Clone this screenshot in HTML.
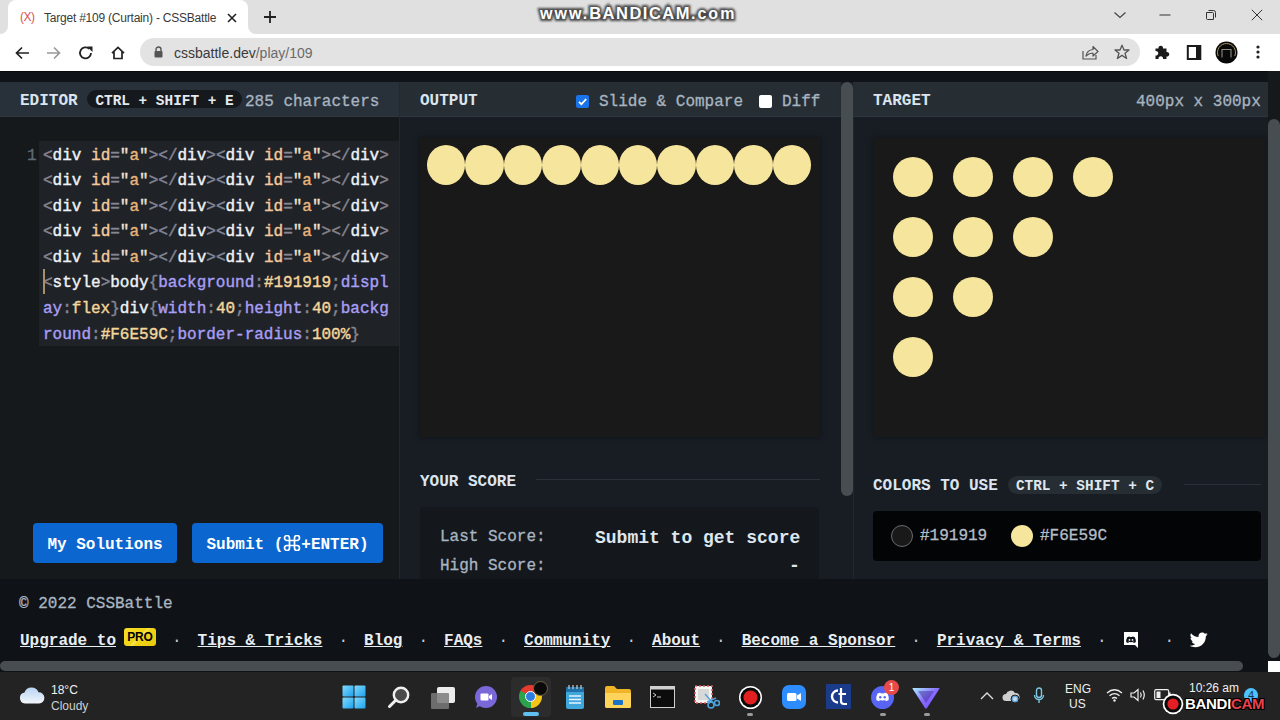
<!DOCTYPE html>
<html><head><meta charset="utf-8">
<style>
*{margin:0;padding:0;box-sizing:border-box}
html,body{width:1280px;height:720px;overflow:hidden;background:#15181c;font-family:"Liberation Mono",monospace}
.abs{position:absolute}
.fav{left:20px;top:10px;font:12px/14px "Liberation Sans",sans-serif;color:#e05050;letter-spacing:-0.5px}
.tabtitle{left:44px;top:10px;font:12px/16px "Liberation Sans",sans-serif;color:#3a3a3a;letter-spacing:-0.22px;white-space:nowrap}
.url{left:174px;top:44px;font:14px/18px "Liberation Sans",sans-serif;white-space:nowrap}
.bandicam{left:540px;top:3px;font:bold 16px/18px "Liberation Sans",sans-serif;color:#fff;text-shadow:0 0 1px #222,0 0 2px #333,0 0 3px #444,0 0 4px #666;white-space:nowrap;letter-spacing:2px;transform-origin:0 0}
.bandicam b{font-size:16.5px;letter-spacing:1.5px}
#tabbar{left:0;top:0;width:1280px;height:34px;background:#e0e0e0}
#tab{left:8px;top:0;width:240px;height:34px;background:#fff;border-radius:8px 8px 0 0}
#toolbar{left:0;top:34px;width:1280px;height:37px;background:#fff}
#omni{left:140px;top:38px;width:1000px;height:28px;background:#e3e3e3;border-radius:14px}
#band{left:0;top:71px;width:1280px;height:11px;background:#101317;border-top:1px solid #08090b}
.hdr{top:82px;height:35px;background:#262e34;border-bottom:1px solid #2e373e}
.hdr .t{position:absolute;top:8px;font:bold 16px/19px "Liberation Mono",monospace;color:#dbe3ef}
#ed{left:0;top:82px;width:399px;height:497px;background:#15191b}
#edb{left:399px;top:82px;width:1px;height:497px;background:#22282e}
#out{left:400px;top:82px;width:441px;height:497px;background:#181d24}
#tgt{left:853px;top:82px;width:415px;height:497px;background:#181d24}
#sb1{left:841px;top:82px;width:12px;height:497px;background:#181d24}
#sb1t{left:841px;top:82px;width:12px;height:414px;background:#474d51;border-radius:6px}
#sb2{left:1268px;top:71px;width:12px;height:590px;background:#15191c}
#sb2t{left:1268px;top:119px;width:12px;height:539px;background:#474d51;border-radius:6px}
#footer{left:0;top:579px;width:1280px;height:81px;background:#0f1216}
#hscroll{left:0;top:660px;width:1280px;height:12px;background:#0f1216}
#hthumb{left:0;top:661px;width:1243px;height:10px;background:#474d51;border-radius:5px}
#taskbar{left:0;top:672px;width:1280px;height:48px;background:#232323}
.code{left:39px;top:141px;width:360px;height:205px;background:#1f2327}
.canvas{background:#191919;box-shadow:0 0 6px 1px rgba(0,0,0,.3)}
.ht{top:90.75px;font:bold 16px/20px "Liberation Mono",monospace;color:#dce4ee;white-space:nowrap}
.hsub{top:91.5px;font:16px/20px "Liberation Mono",monospace;color:#a8b4c0;white-space:nowrap;-webkit-text-stroke:0.3px currentColor}
.pill{height:18px;padding-top:2px;border-radius:9px;background:#15191d;color:#e4e9ef;font:bold 14.4px/18px "Liberation Mono",monospace;text-align:center;white-space:nowrap}
.lnum{left:27px;top:143.5px;font:16px/25.6px "Liberation Mono",monospace;color:#5f6a74;-webkit-text-stroke:0.3px currentColor}
.src{left:43px;top:143.5px;width:360px;font:16px/25.6px "Liberation Mono",monospace;white-space:pre;color:#e8edf3;-webkit-text-stroke:0.4px currentColor}
.src .p{color:#868593}.src .w{color:#eef2f6}.src .o{color:#f3c99c}.src .q{color:#efe2d6}.src .a{color:#eab47c}.src .v{color:#a89ef4}.src .y{color:#f3d69c}
.btn{top:523px;height:40px;background:#0b66d0;border-radius:4px;color:#fff;font:bold 16px/44px "Liberation Mono",monospace;text-align:center;white-space:nowrap}
.sec{font:bold 16px/20px "Liberation Mono",monospace;color:#dce4ee;white-space:nowrap}
.lbl{font:16px/20px "Liberation Mono",monospace;color:#a9b5c2;white-space:nowrap;-webkit-text-stroke:0.3px currentColor}
.big{font:bold 18px/22px "Liberation Mono",monospace;color:#dfe6ee;white-space:nowrap}
.pill2{height:18px;border-radius:9px;background:#262d33;color:#dfe6ee;font:bold 14.4px/18px "Liberation Mono",monospace;text-align:center;white-space:nowrap;padding-top:1px}
.sw{top:526px;font:16px/20px "Liberation Mono",monospace;color:#b3bdc7;white-space:nowrap;-webkit-text-stroke:0.3px currentColor}
.copy{font:16px/20px "Liberation Mono",monospace;color:#a9b5c2;white-space:nowrap;-webkit-text-stroke:0.3px currentColor}
.links{font:bold 16px/20px "Liberation Mono",monospace;color:#e8edf2;white-space:nowrap}
.links u{text-decoration:underline;text-underline-offset:1.2px;text-decoration-thickness:1px}
.links .d{display:inline-block;width:9.6px;margin:0 16px;text-align:center;color:#c0c8d0;font-weight:normal}
.links .pro{display:inline-block;margin-left:8px;width:32px;height:18px;vertical-align:top;margin-top:-3px;background:linear-gradient(135deg,#f7dc2a 0%,#f2d516 45%,#fbe55a 50%,#f2d516 55%,#e8c80a 100%);border-radius:3px;color:#000;font:bold 12px/19px "Liberation Sans",sans-serif;text-align:center;letter-spacing:-0.2px}
.links .ico{display:inline-block;width:26px;height:10px}
.tb1{font:12px/15px "Liberation Sans",sans-serif;color:#f2f2f2;white-space:nowrap}
.tb2{font:12px/15px "Liberation Sans",sans-serif;color:#f0f0f0;white-space:nowrap}
.badge{width:15px;height:15px;border-radius:50%;background:#e84a4a;color:#fff;font:10px/15px "Liberation Sans",sans-serif;text-align:center}
.bcam{font:bold 15px/18px "Liberation Sans",sans-serif;color:#fff;letter-spacing:-0.3px;text-shadow:1px 0 0 #000,-1px 0 0 #000,0 1px 0 #000,0 -1px 0 #000,1px 1px 0 #000,-1px -1px 0 #000,1px -1px 0 #000,-1px 1px 0 #000}
.c{display:block;flex:1 1 0;height:40px;background:#f6e59c;border-radius:50%}
.dot{position:absolute;background:#f6e59c;border-radius:50%}
</style></head><body>
<div id="tabbar" class="abs"></div>
<div id="tab" class="abs"></div>
<div class="abs" style="left:248px;top:26px;width:8px;height:8px;background:#fff"></div>
<div class="abs" style="left:248px;top:0;width:30px;height:34px;background:#e0e0e0;border-bottom-left-radius:8px"></div>
<div class="abs" style="left:0;top:26px;width:8px;height:8px;background:#fff"></div>
<div class="abs" style="left:-22px;top:0;width:30px;height:34px;background:#e0e0e0;border-bottom-right-radius:8px"></div>
<div class="abs fav">(X)</div>
<div class="abs tabtitle">Target #109 (Curtain) - CSSBattle</div>
<svg class="abs" style="left:226px;top:12px" width="12" height="12" viewBox="0 0 12 12"><path d="M2 2L10 10M10 2L2 10" stroke="#222" stroke-width="1.6"/></svg>
<svg class="abs" style="left:263px;top:10px" width="14" height="14" viewBox="0 0 14 14"><path d="M7 1V13M1 7H13" stroke="#222" stroke-width="1.8"/></svg>
<svg class="abs" style="left:532px;top:0" width="216" height="28" viewBox="0 0 216 28"><defs><filter id="bl" x="-10%" y="-30%" width="120%" height="160%"><feGaussianBlur stdDeviation="1.2"/></filter></defs><g font-family="Liberation Sans" font-weight="bold" font-size="16" style="letter-spacing:2px"><text x="8" y="19" stroke="#4a4a4a" stroke-width="4" fill="#4a4a4a" filter="url(#bl)">www.<tspan style="letter-spacing:1.5px" font-size="16.5">BANDICAM</tspan>.com</text><text x="8" y="19" fill="#fff">www.<tspan style="letter-spacing:1.5px" font-size="16.5">BANDICAM</tspan>.com</text></g></svg>
<svg class="abs" style="left:1113px;top:10px" width="14" height="10" viewBox="0 0 14 10"><path d="M1.5 2.5L7 7.5L12.5 2.5" fill="none" stroke="#444" stroke-width="1.2"/></svg>
<svg class="abs" style="left:1159px;top:9px" width="12" height="12" viewBox="0 0 12 12"><path d="M0.5 6H11.5" stroke="#333" stroke-width="1"/></svg>
<svg class="abs" style="left:1205px;top:9px" width="12" height="12" viewBox="0 0 12 12"><path d="M3.5 1.5H8.5Q10.5 1.5 10.5 3.5V8.5M1.5 3.5H7.5Q8.5 3.5 8.5 4.5V10.5H2.5Q1.5 10.5 1.5 9.5Z" fill="none" stroke="#333" stroke-width="1"/></svg>
<svg class="abs" style="left:1251px;top:9px" width="12" height="12" viewBox="0 0 12 12"><path d="M0.8 0.8L11.2 11.2M11.2 0.8L0.8 11.2" stroke="#333" stroke-width="1"/></svg>
<div id="toolbar" class="abs"></div>
<div id="omni" class="abs"></div>
<svg class="abs" style="left:14px;top:45px" width="16" height="16" viewBox="0 0 16 16"><path d="M15 8H2.5M8 2.5L2.5 8L8 13.5" fill="none" stroke="#222" stroke-width="1.7"/></svg>
<svg class="abs" style="left:46px;top:45px" width="16" height="16" viewBox="0 0 16 16"><path d="M1 8H13.5M8 2.5L13.5 8L8 13.5" fill="none" stroke="#999" stroke-width="1.7"/></svg>
<svg class="abs" style="left:78px;top:45px" width="16" height="16" viewBox="0 0 16 16"><path d="M13 8A5.5 5.5 0 1 1 11.2 3.8" fill="none" stroke="#222" stroke-width="1.8"/><path d="M9 1.5H14.5V7Z" fill="#222"/></svg>
<svg class="abs" style="left:110px;top:45px" width="16" height="16" viewBox="0 0 16 16"><path d="M2 8.2L8 2.5L14 8.2M4 6.5V13.5H12V6.5" fill="none" stroke="#222" stroke-width="1.7" stroke-linejoin="miter"/></svg>
<svg class="abs" style="left:153px;top:46px" width="11" height="12" viewBox="0 0 11 12"><path d="M3 5V3.5A2.5 2.5 0 0 1 8 3.5V5" fill="none" stroke="#555" stroke-width="1.4"/><rect x="1.5" y="5" width="8" height="6.5" rx="1" fill="#555"/></svg>
<div class="abs url"><span style="color:#3a3a3a">cssbattle.dev</span><span style="color:#6a6a6a">/play/109</span></div>
<svg class="abs" style="left:1082px;top:44px" width="17" height="16" viewBox="0 0 17 16"><path d="M1 7V15H14V11" fill="none" stroke="#555" stroke-width="1.2"/><path d="M4 12Q5 6 11 5.5V2.5L16 7.5L11 12V9Q7 9 4 12Z" fill="none" stroke="#555" stroke-width="1.2" stroke-linejoin="round"/></svg>
<svg class="abs" style="left:1114px;top:44px" width="16" height="16" viewBox="0 0 16 16"><path d="M8 1.2L10 6H15L11 9.2L12.6 14.5L8 11.4L3.4 14.5L5 9.2L1 6H6Z" fill="none" stroke="#555" stroke-width="1.3" stroke-linejoin="round"/></svg>
<svg class="abs" style="left:1153px;top:43px" width="18" height="18" viewBox="0 0 18 18"><path d="M2.5 5.5H5.5A2.3 2.3 0 1 1 10 5.5H13.5V9A2.3 2.3 0 1 1 13.5 13.5V16H10A2.3 2.3 0 1 0 5.5 16H2.5V12.5A2.3 2.3 0 1 0 2.5 8Z" fill="#1a1a1a"/></svg>
<svg class="abs" style="left:1186px;top:45px" width="16" height="15" viewBox="0 0 16 15"><rect x="1.8" y="1" width="12.5" height="13" fill="none" stroke="#1a1a1a" stroke-width="2"/><rect x="10" y="1" width="4.3" height="13" fill="#1a1a1a"/></svg>
<svg class="abs" style="left:1215px;top:41px" width="23" height="23" viewBox="0 0 23 23"><circle cx="11.5" cy="11.5" r="11" fill="#080808"/><path d="M3.2 15A9 9 0 1 1 19.8 15" fill="none" stroke="#a8955e" stroke-width="1"/><path d="M7 16.5V8.5H16V16.5" fill="none" stroke="#8c8c84" stroke-width="1.1"/></svg>
<svg class="abs" style="left:1255px;top:44px" width="6" height="16" viewBox="0 0 6 16"><circle cx="3" cy="3" r="1.6" fill="#222"/><circle cx="3" cy="8" r="1.6" fill="#222"/><circle cx="3" cy="13" r="1.6" fill="#222"/></svg>
<div id="band" class="abs"></div>

<div id="ed" class="abs"></div>
<div id="edb" class="abs"></div>
<div class="abs hdr" style="left:0;width:399px;background:#28313a"></div>
<div class="abs ht" style="left:20px">EDITOR</div>
<div class="abs pill" style="left:87px;top:90px;width:155px">CTRL + SHIFT + E</div>
<div class="abs hsub" style="left:245px">285 characters</div>
<div class="abs code"></div>
<div class="abs lnum">1</div>
<div class="abs src"><span class="p">&lt;</span><span class="w">div</span> <span class="o">id</span><span class="p">=</span><span class="q">"</span><span class="a">a</span><span class="q">"</span><span class="p">&gt;&lt;/</span><span class="w">div</span><span class="p">&gt;&lt;</span><span class="w">div</span> <span class="o">id</span><span class="p">=</span><span class="q">"</span><span class="a">a</span><span class="q">"</span><span class="p">&gt;&lt;/</span><span class="w">div</span><span class="p">&gt;</span>
<span class="p">&lt;</span><span class="w">div</span> <span class="o">id</span><span class="p">=</span><span class="q">"</span><span class="a">a</span><span class="q">"</span><span class="p">&gt;&lt;/</span><span class="w">div</span><span class="p">&gt;&lt;</span><span class="w">div</span> <span class="o">id</span><span class="p">=</span><span class="q">"</span><span class="a">a</span><span class="q">"</span><span class="p">&gt;&lt;/</span><span class="w">div</span><span class="p">&gt;</span>
<span class="p">&lt;</span><span class="w">div</span> <span class="o">id</span><span class="p">=</span><span class="q">"</span><span class="a">a</span><span class="q">"</span><span class="p">&gt;&lt;/</span><span class="w">div</span><span class="p">&gt;&lt;</span><span class="w">div</span> <span class="o">id</span><span class="p">=</span><span class="q">"</span><span class="a">a</span><span class="q">"</span><span class="p">&gt;&lt;/</span><span class="w">div</span><span class="p">&gt;</span>
<span class="p">&lt;</span><span class="w">div</span> <span class="o">id</span><span class="p">=</span><span class="q">"</span><span class="a">a</span><span class="q">"</span><span class="p">&gt;&lt;/</span><span class="w">div</span><span class="p">&gt;&lt;</span><span class="w">div</span> <span class="o">id</span><span class="p">=</span><span class="q">"</span><span class="a">a</span><span class="q">"</span><span class="p">&gt;&lt;/</span><span class="w">div</span><span class="p">&gt;</span>
<span class="p">&lt;</span><span class="w">div</span> <span class="o">id</span><span class="p">=</span><span class="q">"</span><span class="a">a</span><span class="q">"</span><span class="p">&gt;&lt;/</span><span class="w">div</span><span class="p">&gt;&lt;</span><span class="w">div</span> <span class="o">id</span><span class="p">=</span><span class="q">"</span><span class="a">a</span><span class="q">"</span><span class="p">&gt;&lt;/</span><span class="w">div</span><span class="p">&gt;</span>
<span class="p">&lt;</span><span class="w">style</span><span class="p">&gt;</span><span class="w">body</span><span class="p">{</span><span class="v">background</span><span class="p">:</span><span class="y">#191919</span><span class="p">;</span><span class="v">displ</span>
<span class="v">ay</span><span class="p">:</span><span class="y">flex</span><span class="p">}</span><span class="w">div</span><span class="p">{</span><span class="v">width</span><span class="p">:</span><span class="y">40</span><span class="p">;</span><span class="v">height</span><span class="p">:</span><span class="y">40</span><span class="p">;</span><span class="v">backg</span>
<span class="v">round</span><span class="p">:</span><span class="y">#F6E59C</span><span class="p">;</span><span class="v">border-radius</span><span class="p">:</span><span class="y">100%</span><span class="p">}</span></div>
<div class="abs" style="left:43px;top:269px;width:2px;height:25px;background:#a88f6c"></div>
<div class="abs btn" style="left:33px;width:144px">My Solutions</div>
<div class="abs btn" style="left:192px;width:191px">Submit (<svg width="18" height="16" viewBox="-1 0 18 16" style="vertical-align:-2px"><path d="M5.5 3V13A2.5 2.5 0 1 1 3 10.5H13A2.5 2.5 0 1 1 10.5 13V3A2.5 2.5 0 1 1 13 5.5H3A2.5 2.5 0 1 1 5.5 3Z" fill="none" stroke="#fff" stroke-width="1.7"/></svg>+ENTER)</div>

<div id="out" class="abs"></div>
<div class="abs hdr" style="left:400px;width:441px"></div>
<div class="abs ht" style="left:420px">OUTPUT</div>
<div class="abs" style="left:576px;top:95px;width:13px;height:13px;background:#1a73e8;border-radius:2px"></div>
<svg class="abs" style="left:576px;top:95px" width="13" height="13" viewBox="0 0 13 13"><path d="M3 6.8L5.4 9.2L10.2 4" fill="none" stroke="#fff" stroke-width="1.8"/></svg>
<div class="abs hsub" style="left:599px">Slide &amp; Compare</div>
<div class="abs" style="left:759px;top:95px;width:13px;height:13px;background:#fff;border-radius:2px"></div>
<div class="abs hsub" style="left:782px">Diff</div>
<div class="abs canvas" style="left:419.5px;top:137.5px;width:400px;height:299.5px"></div>
<div class="abs" style="left:427px;top:145px;width:384px;height:40px;display:flex">
<i class="c"></i><i class="c"></i><i class="c"></i><i class="c"></i><i class="c"></i><i class="c"></i><i class="c"></i><i class="c"></i><i class="c"></i><i class="c"></i></div>

<div id="sb1" class="abs"></div>
<div id="sb1t" class="abs"></div>

<div id="tgt" class="abs"></div>
<div class="abs hdr" style="left:853px;width:415px"></div>
<div class="abs ht" style="left:873px">TARGET</div>
<div class="abs hsub" style="left:1136px">400px x 300px</div>
<div class="abs canvas" style="left:873.5px;top:137.5px;width:391px;height:299.5px"></div>
<div class="dot" style="left:893px;top:157px;width:40px;height:40px"></div>
<div class="dot" style="left:953px;top:157px;width:40px;height:40px"></div>
<div class="dot" style="left:1013px;top:157px;width:40px;height:40px"></div>
<div class="dot" style="left:1073px;top:157px;width:40px;height:40px"></div>
<div class="dot" style="left:893px;top:217px;width:40px;height:40px"></div>
<div class="dot" style="left:953px;top:217px;width:40px;height:40px"></div>
<div class="dot" style="left:1013px;top:217px;width:40px;height:40px"></div>
<div class="dot" style="left:893px;top:277px;width:40px;height:40px"></div>
<div class="dot" style="left:953px;top:277px;width:40px;height:40px"></div>
<div class="dot" style="left:893px;top:337px;width:40px;height:40px"></div>
<div id="sb2" class="abs"></div>

<div class="abs sec" style="left:420px;top:471.5px">YOUR SCORE</div>
<div class="abs" style="left:536px;top:479px;width:284px;height:1px;background:#2a3138"></div>
<div class="abs" style="left:420px;top:507px;width:399px;height:80px;background:#14181c;border-radius:4px"></div>
<div class="abs lbl" style="left:440px;top:526.5px">Last Score:</div>
<div class="abs lbl" style="left:440px;top:555.5px">High Score:</div>
<div class="abs big" style="left:595px;top:527px">Submit to get score</div>
<div class="abs big" style="left:789px;top:555px">-</div>

<div class="abs" style="left:853px;top:117px;width:1px;height:462px;background:#20262c"></div>
<div class="abs sec" style="left:873px;top:475.5px">COLORS TO USE</div>
<div class="abs pill2" style="left:1008px;top:475.5px;width:154px">CTRL + SHIFT + C</div>
<div class="abs" style="left:1184px;top:484px;width:77px;height:1px;background:#2a3138"></div>
<div class="abs" style="left:873px;top:511px;width:388px;height:50px;background:#030405;border-radius:4px"></div>
<div class="abs" style="left:891px;top:525px;width:22px;height:22px;border-radius:50%;background:#191919;border:1px solid #6b6b6b"></div>
<div class="abs sw" style="left:920px">#191919</div>
<div class="abs" style="left:1011px;top:525px;width:22px;height:22px;border-radius:50%;background:#f6e59c"></div>
<div class="abs sw" style="left:1040px">#F6E59C</div>

<div id="footer" class="abs"></div>
<div class="abs copy" style="left:19px;top:593.5px">&copy; 2022 CSSBattle</div>
<div class="abs links" style="left:20px;top:631px"><u>Upgrade to</u><span class="pro">PRO</span><span class="d">&middot;</span><u>Tips &amp; Tricks</u><span class="d">&middot;</span><u>Blog</u><span class="d">&middot;</span><u>FAQs</u><span class="d">&middot;</span><u>Community</u><span class="d">&middot;</span><u>About</u><span class="d">&middot;</span><u>Become a Sponsor</u><span class="d">&middot;</span><u>Privacy &amp; Terms</u><span class="d">&middot;</span><span class="ico"></span><span class="d">&middot;</span></div>
<svg class="abs" style="left:1122px;top:631px" width="18" height="18" viewBox="0 0 18 18"><path d="M2 1H16V17L13 14H2Z" fill="#fff"/><path d="M5.2 6.2Q7 5.3 7.5 5.6L7.8 6.1Q9 5.9 10.2 6.1L10.5 5.6Q11 5.3 12.8 6.2Q14 8.5 13.8 11Q12.7 11.8 11.6 12L11.1 11.3Q12 11 12.3 10.6Q9 12 5.7 10.6Q6 11 6.9 11.3L6.4 12Q5.3 11.8 4.2 11Q4 8.5 5.2 6.2Z" fill="#0f1216"/><circle cx="7.5" cy="8.9" r="0.9" fill="#fff"/><circle cx="10.5" cy="8.9" r="0.9" fill="#fff"/></svg>
<svg class="abs" style="left:1190px;top:632px" width="18" height="16" viewBox="0 0 24 20"><path d="M23.6 2.4c-.9.4-1.8.6-2.8.8 1-.6 1.8-1.5 2.1-2.7-.9.6-2 1-3.1 1.2C18.9.7 17.6.1 16.2.1c-2.7 0-4.9 2.2-4.9 4.9 0 .4 0 .8.1 1.1C7.3 5.9 3.7 4 1.3 1c-.4.7-.7 1.6-.7 2.5 0 1.7.9 3.2 2.2 4.1-.8 0-1.6-.2-2.2-.6v.1c0 2.4 1.7 4.4 3.9 4.8-.4.1-.8.2-1.3.2-.3 0-.6 0-.9-.1.6 2 2.4 3.4 4.6 3.4-1.7 1.3-3.8 2.1-6.1 2.1-.4 0-.8 0-1.2-.1 2.2 1.4 4.8 2.2 7.5 2.2 9.1 0 14-7.5 14-14v-.6c1-.7 1.8-1.6 2.5-2.6z" fill="#fff"/></svg>
<div id="hscroll" class="abs"></div>
<div id="hthumb" class="abs"></div>
<div class="abs" style="left:1268px;top:579px;width:12px;height:82px;background:#0f1216"></div>
<div id="sb2t" class="abs"></div>
<div class="abs" style="left:1268px;top:661px;width:12px;height:11px;background:#fff"></div>
<div id="taskbar" class="abs"></div>
<svg class="abs" style="left:18px;top:686px" width="28" height="18" viewBox="0 0 28 18"><defs><linearGradient id="cl" x1="0" y1="0" x2="0" y2="1"><stop offset="0" stop-color="#b8d4f5"/><stop offset="1" stop-color="#f2f6fb"/></linearGradient></defs><path d="M7 17.5A5.5 5.5 0 0 1 6.5 6.6A7.5 7.5 0 0 1 20.5 6.2A5.6 5.6 0 0 1 21 17.5Z" fill="url(#cl)"/></svg>
<div class="abs tb1" style="left:51px;top:682.5px">18&deg;C</div>
<div class="abs tb1" style="left:51px;top:698.5px;color:#d0d0d0">Cloudy</div>
<!-- windows -->
<svg class="abs" style="left:342px;top:685px" width="24" height="24" viewBox="0 0 24 24"><defs><linearGradient id="wg" x1="0" y1="0" x2="1" y2="1"><stop offset="0" stop-color="#7fdcff"/><stop offset="1" stop-color="#1fa0ee"/></linearGradient></defs><rect x="0.5" y="0.5" width="11" height="11" rx="1" fill="url(#wg)"/><rect x="12.5" y="0.5" width="11" height="11" rx="1" fill="url(#wg)"/><rect x="0.5" y="12.5" width="11" height="11" rx="1" fill="url(#wg)"/><rect x="12.5" y="12.5" width="11" height="11" rx="1" fill="url(#wg)"/></svg>
<!-- search -->
<svg class="abs" style="left:387px;top:685px" width="24" height="24" viewBox="0 0 24 24"><circle cx="14" cy="10" r="7.2" fill="#4a4a4a" stroke="#f0f0f0" stroke-width="2.4"/><path d="M9 15L2.5 21.5" stroke="#f0f0f0" stroke-width="3" stroke-linecap="round"/></svg>
<!-- task view -->
<svg class="abs" style="left:430px;top:686px" width="26" height="23" viewBox="0 0 26 23"><rect x="7" y="1" width="18" height="16" rx="2" fill="#ececec"/><rect x="1" y="7" width="18" height="16" rx="1" fill="#7a7a7a" opacity="0.85"/></svg>
<!-- teams -->
<svg class="abs" style="left:474px;top:685px" width="24" height="24" viewBox="0 0 24 24"><circle cx="12" cy="12" r="11" fill="#7b68d8"/><path d="M2 23L4 17L8 20Z" fill="#7b68d8"/><rect x="6.5" y="8.5" width="8" height="7" rx="1" fill="#fff"/><path d="M15 11L18 9V15L15 13Z" fill="#fff"/></svg>
<!-- chrome highlight -->
<div class="abs" style="left:511px;top:677px;width:40px;height:40px;background:#2c2c2c;border-radius:4px"></div>
<div class="abs" style="left:523px;top:712px;width:16px;height:3.5px;background:#60c0f0;border-radius:2px"></div>
<div class="abs" style="left:519px;top:685px;width:23px;height:23px;border-radius:50%;background:conic-gradient(#e33b2e 0 60deg,#f5c518 60deg 180deg,#2ca24c 180deg 300deg,#e33b2e 300deg 360deg)"></div>
<div class="abs" style="left:525px;top:691px;width:11px;height:11px;border-radius:50%;background:#2f7de1;border:1.5px solid #fff"></div>
<div class="abs" style="left:533px;top:681px;width:15px;height:15px;border-radius:50%;background:#0a0a0a;border:1px solid #6f6340"></div>
<!-- notepad -->
<svg class="abs" style="left:564px;top:684px" width="22" height="26" viewBox="0 0 22 26"><rect x="2" y="3" width="18" height="22" rx="2" fill="#3fa7dc"/><rect x="2" y="3" width="18" height="5" fill="#1f6fa8"/><path d="M5 12H17M5 15.5H17M5 19H17" stroke="#e8f4fb" stroke-width="1.4"/><path d="M5 1V5M9 1V5M13 1V5M17 1V5" stroke="#cfcfcf" stroke-width="1.2"/></svg>
<!-- explorer -->
<svg class="abs" style="left:604px;top:685px" width="28" height="24" viewBox="0 0 28 24"><path d="M1 3Q1 1 3 1H10L13 4H25Q27 4 27 6V22Q27 23 25 23H3Q1 23 1 21Z" fill="#f0b429"/><path d="M1 8H27V21Q27 23 25 23H3Q1 23 1 21Z" fill="#ffd45a"/><rect x="9" y="15" width="10" height="5" rx="1" fill="#1a73c8"/></svg>
<!-- terminal -->
<svg class="abs" style="left:650px;top:686px" width="25" height="22" viewBox="0 0 25 22"><rect x="0.5" y="0.5" width="24" height="21" fill="#0c0c0c" stroke="#d0d0d0" stroke-width="1"/><rect x="0.5" y="0.5" width="24" height="3" fill="#d0d0d0"/><path d="M3 7L6 9L3 11M7 11H11" stroke="#ddd" stroke-width="0.9" fill="none"/></svg>
<!-- snipping -->
<svg class="abs" style="left:693px;top:684px" width="27" height="26" viewBox="0 0 27 26"><rect x="2" y="2" width="17" height="17" fill="#f4f4f4" stroke="#e05a5a" stroke-width="1.5" stroke-dasharray="2 2"/><rect x="5" y="5" width="11" height="11" fill="#d8d8d8"/><circle cx="18" cy="21" r="3" fill="none" stroke="#4aa3df" stroke-width="1.6"/><circle cx="24" cy="19" r="2.5" fill="none" stroke="#4aa3df" stroke-width="1.6"/><path d="M12 10L20 19M14 18L23 14" stroke="#4aa3df" stroke-width="1.4"/></svg>
<!-- record -->
<svg class="abs" style="left:738px;top:685px" width="25" height="25" viewBox="0 0 25 25"><circle cx="12.5" cy="12.5" r="11.5" fill="#fff"/><circle cx="12.5" cy="12.5" r="10" fill="#0a0a0a"/><circle cx="12.5" cy="12.5" r="7" fill="#e02020"/></svg>
<div class="abs" style="left:747px;top:713px;width:6px;height:3px;background:#9a9a9a;border-radius:2px"></div>
<!-- zoom -->
<svg class="abs" style="left:782px;top:685px" width="24" height="24" viewBox="0 0 24 24"><rect x="0" y="0" width="24" height="24" rx="7" fill="#2d8cff"/><rect x="5" y="8" width="9.5" height="8" rx="1.5" fill="#fff"/><path d="M15 10.5L19 8V16L15 13.5Z" fill="#fff"/></svg>
<!-- ct -->
<svg class="abs" style="left:826px;top:684px" width="25" height="25" viewBox="0 0 25 25"><rect x="0" y="0" width="25" height="25" fill="#1a3a8a"/><path d="M12 6.5A6 6 0 1 0 12 18.5" fill="none" stroke="#fff" stroke-width="2.4"/><path d="M15 4V17Q15 20 18 20H21M12.5 10H20" fill="none" stroke="#fff" stroke-width="2.2"/></svg>
<!-- discord -->
<svg class="abs" style="left:870px;top:685px" width="26" height="25" viewBox="0 0 26 25"><circle cx="12.5" cy="12.5" r="11.5" fill="#5865f2"/><path d="M7.5 8.5Q9.5 7.5 10.5 7.8L10.8 8.4Q12.5 8.1 14.2 8.4L14.5 7.8Q15.5 7.5 17.5 8.5Q19 11.5 18.7 15Q17.3 16 15.8 16.3L15.2 15.3Q16.3 15 16.8 14.5Q12.5 16.3 8.2 14.5Q8.7 15 9.8 15.3L9.2 16.3Q7.7 16 6.3 15Q6 11.5 7.5 8.5Z" fill="#fff"/><circle cx="10.3" cy="12.2" r="1.2" fill="#5865f2"/><circle cx="14.7" cy="12.2" r="1.2" fill="#5865f2"/></svg>
<div class="abs badge" style="left:884px;top:680px">1</div>
<div class="abs" style="left:880px;top:713px;width:6px;height:3px;background:#9a9a9a;border-radius:2px"></div>
<!-- proton -->
<svg class="abs" style="left:912px;top:686px" width="28" height="24" viewBox="0 0 28 24"><defs><linearGradient id="pv" x1="0" y1="0" x2="1" y2="1"><stop offset="0" stop-color="#a8f0ff"/><stop offset="0.5" stop-color="#8a6cff"/><stop offset="1" stop-color="#6d4aff"/></linearGradient></defs><path d="M1 2L27 2Q28 2 27.3 3L15 22Q14 23.5 13 22L0.7 3Q0 2 1 2Z" fill="url(#pv)"/><path d="M6 5L22 5L14 17Z" fill="#3a2a8a" opacity="0.45"/></svg>
<div class="abs" style="left:924px;top:713px;width:6px;height:3px;background:#9a9a9a;border-radius:2px"></div>
<!-- tray -->
<svg class="abs" style="left:980px;top:691px" width="14" height="9" viewBox="0 0 14 9"><path d="M1 8L7 2L13 8" fill="none" stroke="#e0e0e0" stroke-width="1.3"/></svg>
<svg class="abs" style="left:1002px;top:689px" width="18" height="15" viewBox="0 0 18 15"><path d="M4 12A3.5 3.5 0 0 1 4 5A5 5 0 0 1 13 4A4 4 0 0 1 14 12Z" fill="#cfcfcf"/><circle cx="13" cy="10" r="4" fill="#6aa7d8" stroke="#202020" stroke-width="1"/><circle cx="13" cy="10" r="2" fill="#bfe0f8"/></svg>
<svg class="abs" style="left:1033px;top:687px" width="12" height="17" viewBox="0 0 12 17"><rect x="3.5" y="1" width="5" height="9.5" rx="2.5" fill="none" stroke="#7ec8e3" stroke-width="1.4"/><path d="M1.5 8A4.5 4.5 0 0 0 10.5 8M6 12.5V16" fill="none" stroke="#7ec8e3" stroke-width="1.4"/></svg>
<div class="abs tb2" style="left:1065px;top:682px">ENG</div>
<div class="abs tb2" style="left:1069px;top:697px">US</div>
<svg class="abs" style="left:1106px;top:688px" width="17" height="14" viewBox="0 0 17 14"><path d="M1 5Q8.5 -1.5 16 5M3.5 7.8Q8.5 3.5 13.5 7.8M6 10.5Q8.5 8.5 11 10.5" fill="none" stroke="#f0f0f0" stroke-width="1.3"/><circle cx="8.5" cy="12.5" r="1.2" fill="#f0f0f0"/></svg>
<svg class="abs" style="left:1130px;top:688px" width="17" height="14" viewBox="0 0 17 14"><path d="M1 5H4L8 1.5V12.5L4 9H1Z" fill="none" stroke="#f0f0f0" stroke-width="1.2"/><path d="M10.5 4.5Q12 7 10.5 9.5M13 2.5Q15.5 7 13 11.5" fill="none" stroke="#f0f0f0" stroke-width="1.2"/></svg>
<svg class="abs" style="left:1154px;top:689px" width="17" height="12" viewBox="0 0 17 12"><rect x="0.7" y="0.7" width="14" height="10" rx="1.5" fill="none" stroke="#f0f0f0" stroke-width="1.2"/><rect x="2.5" y="2.5" width="4" height="6.5" fill="#f0f0f0"/><rect x="15" y="3.5" width="1.6" height="4" fill="#f0f0f0"/></svg>
<div class="abs tb2" style="left:1189px;top:681px">10:26 am</div>
<div class="abs" style="left:1244px;top:688px;width:14px;height:15px;border-radius:50%;background:#4cc2ff;color:#1a3050;font:11px/15px 'Liberation Sans',sans-serif;text-align:center">4</div>
<svg class="abs" style="left:1162px;top:693px" width="22" height="22" viewBox="0 0 22 22"><circle cx="11" cy="11" r="10.3" fill="#fff"/><circle cx="11" cy="11" r="8.6" fill="#0a0a0a"/><circle cx="11" cy="11" r="5.6" fill="#e31e24"/></svg>
<div class="abs bcam" style="left:1185px;top:695px">BANDI<span style="color:#e8424a">CAM</span></div>
</body></html>
